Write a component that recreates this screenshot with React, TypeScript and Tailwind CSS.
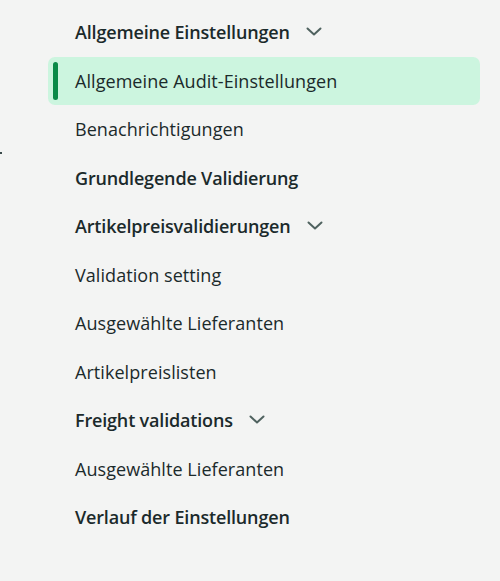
import React from "react";

type Item = { label: string; bold?: boolean; chevron?: boolean; active?: boolean };

const items: Item[] = [
  { label: "Allgemeine Einstellungen", bold: true, chevron: true },
  { label: "Allgemeine Audit-Einstellungen", active: true },
  { label: "Benachrichtigungen" },
  { label: "Grundlegende Validierung", bold: true },
  { label: "Artikelpreisvalidierungen", bold: true, chevron: true },
  { label: "Validation setting" },
  { label: "Ausgewählte Lieferanten" },
  { label: "Artikelpreislisten" },
  { label: "Freight validations", bold: true, chevron: true },
  { label: "Ausgewählte Lieferanten" },
  { label: "Verlauf der Einstellungen", bold: true },
];

function Chevron() {
  return (
    <svg width="16" height="16" viewBox="0 0 16 16" className="ml-[16px] text-[#4f625f]">
      <path d="M1.5 4.5 L8 10.5 L14.5 4.5" fill="none" stroke="currentColor" strokeWidth="2" strokeLinecap="round" strokeLinejoin="round" />
    </svg>
  );
}

export default function App() {
  return (
    <div
      className="relative w-[500px] h-[581px] bg-[#f3f4f3] text-[#1b2a2b]"
      style={{ fontFamily: '"Open Sans", "Noto Sans", sans-serif' }}
    >
      <div className="absolute left-0 top-[152px] w-[2px] h-[2px] bg-[#3a4a4a]" />
      <nav className="flex flex-col pt-[8px] pl-[48px] pr-[20px]">
        {items.map((it, i) => (
          <div
            key={i}
            className={`relative flex items-center h-[48.5px] pl-[27px] rounded-[7px] ${
              it.active ? "bg-[#ccf5df]" : ""
            }`}
          >
            {it.active && (
              <div className="absolute left-[5px] top-[5px] bottom-[5px] w-[5px] rounded-full bg-[#0a8a48]" />
            )}
            <span
              className={`text-[18px] leading-[24px] ${
                it.bold ? "font-semibold tracking-[-0.17px]" : "font-normal tracking-[0.06px]"
              }`}
            >
              {it.label}
            </span>
            {it.chevron && <Chevron />}
          </div>
        ))}
      </nav>
    </div>
  );
}
